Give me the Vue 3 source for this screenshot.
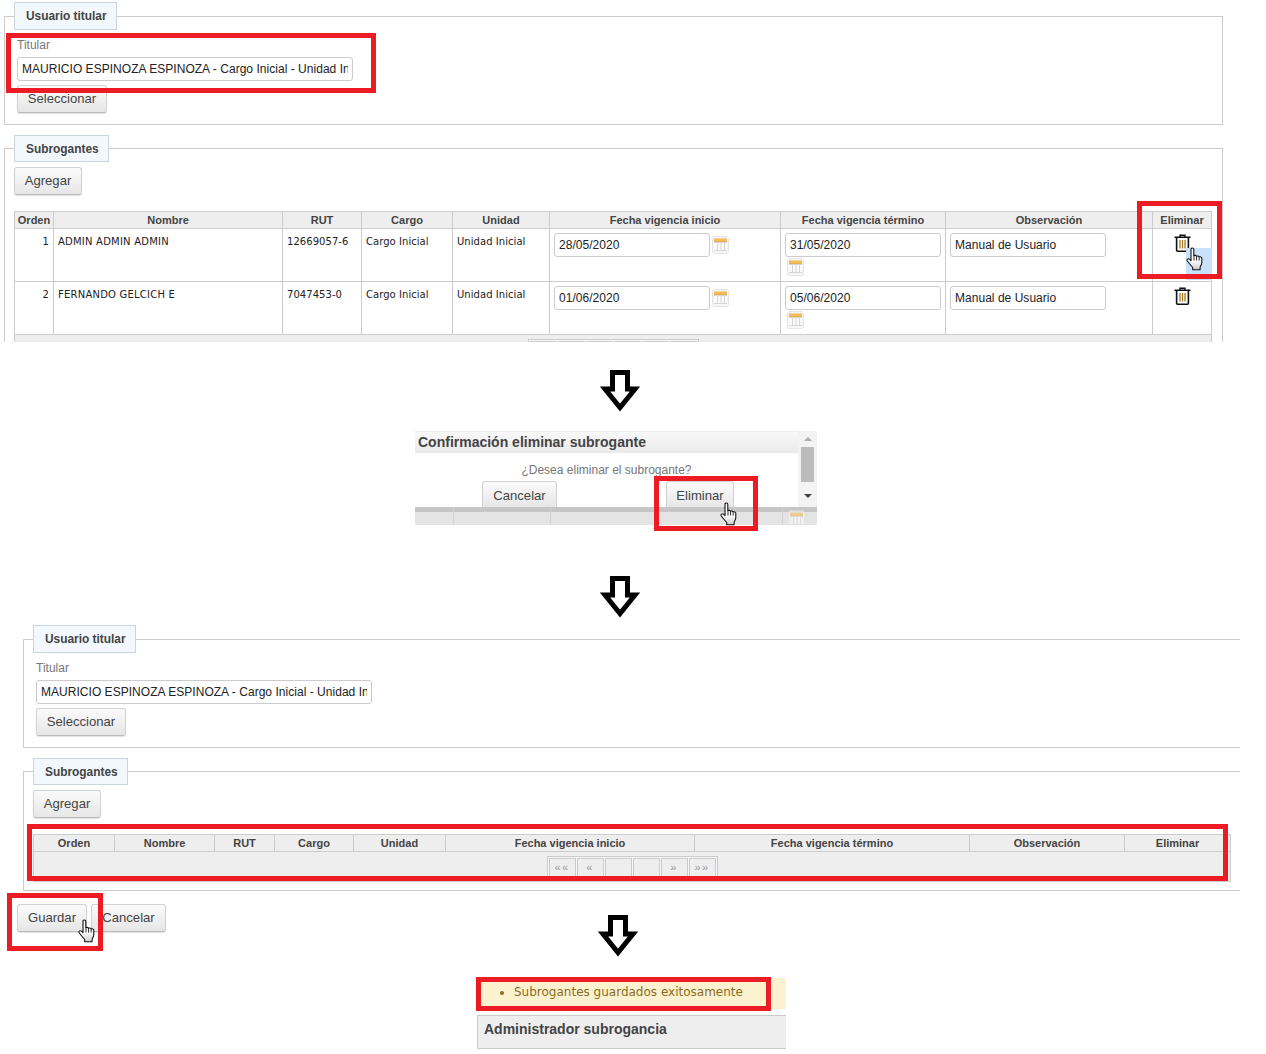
<script setup>
const colsA = [39, 229, 79, 91, 97, 231, 165, 207, 59]
const colsC = [81, 100, 60, 79, 92, 249, 275, 155, 106]
const heads = ['Orden', 'Nombre', 'RUT', 'Cargo', 'Unidad', 'Fecha vigencia inicio', 'Fecha vigencia término', 'Observación', 'Eliminar']
const rows = [
  { n: 1, name: 'ADMIN ADMIN ADMIN', rut: '12669057-6', from: '28/05/2020', to: '31/05/2020' },
  { n: 2, name: 'FERNANDO GELCICH E', rut: '7047453-0', from: '01/06/2020', to: '05/06/2020' }
]
const titular = 'MAURICIO ESPINOZA ESPINOZA - Cargo Inicial - Unidad Inicial'
const pager = ['««', '«', '', '', '»', '»»']
const arrows = ['a1', 'a2', 'a3']
const hands = ['h1', 'h2', 'h3']
const reds = ['r1', 'r2', 'r3', 'r4', 'r5', 'r6']
</script>

<template>
  <div class="canvas">
    <svg class="defs" width="0" height="0" aria-hidden="true">
      <symbol id="cal" viewBox="0 0 17 18">
        <rect x="0.5" y="0.5" width="16" height="17" rx="2" fill="#f6f6f6" stroke="#e4e4e4" />
        <rect x="2" y="6" width="13" height="9" fill="#fafafa" />
        <rect x="2" y="2.500" width="13" height="3.500" fill="#efaf45" />
        <rect x="2" y="3.500" width="13" height="1" fill="#f6c97e" />
        <path d="M2 6.500h13M2 14.500h13M5.500 7v7M9 7v7M12.500 7v7" stroke="#d6d6d6" fill="none" />
      </symbol>
      <symbol id="trash" viewBox="0 0 17 18">
        <path d="M6 3V1.200h5V3M.5 3.300h16" fill="none" stroke="#111" stroke-width="1.400" />
        <path d="M2.600 4v12.200q0 1 1 1h9.800q1 0 1-1V4" fill="#fff" stroke="#111" stroke-width="1.600" />
        <path d="M6 6v8.500M8.500 6v8.500M11 6v8.500" fill="none" stroke="#a87a26" stroke-width="1.300" />
      </symbol>
      <linearGradient id="handfill" x1="0" y1="0" x2="0" y2="1">
        <stop offset="0.55" stop-color="#fff" />
        <stop offset="1" stop-color="#cdcdcd" />
      </linearGradient>
      <symbol id="hand" viewBox="0 0 18 24">
        <path d="M5 2.200c0-1.600 2.800-1.600 2.800 0V9c.9-1 2.400-.8 2.700.4 1-.8 2.400-.4 2.600.7 1-.7 2.700-.2 2.700 1.100v4.600c0 2-1.200 3-1.700 4.500v2.400H6.700v-2.200C5 18.600 3.200 16.500 1.300 14c-1-1.500.8-3 2.200-1.800L5 13.700z" fill="url(#handfill)" stroke="#111" stroke-width="1.100" stroke-linejoin="round" />
        <path d="M8 9.500v4M10.600 9.800v3.700M13.200 10.500v3" fill="none" stroke="#111" stroke-width="0.900" />
      </symbol>
      <symbol id="arrow" viewBox="0 0 40 42">
        <polygon points="12.500,2.500 27.500,2.500 27.500,19 35,19 20,37.500 5,19 12.500,19" fill="#fff" stroke="#000" stroke-width="5" />
      </symbol>
    </svg>

    <section class="panel panel-a">
      <fieldset class="fs fs-user">
        <legend>Usuario titular</legend>
        <label class="field-label">Titular</label>
        <input class="text wide" :value="titular" readonly />
        <button class="btn select">Seleccionar</button>
      </fieldset>
      <fieldset class="fs fs-sub">
        <legend>Subrogantes</legend>
        <button class="btn add">Agregar</button>
        <table class="grid">
          <colgroup><col v-for="(w, i) in colsA" :key="i" :style="{ width: w + 'px' }" /></colgroup>
          <thead><tr><th v-for="h in heads" :key="h">{{ h }}</th></tr></thead>
          <tbody>
            <tr v-for="r in rows" :key="r.n" class="data">
              <td class="num">{{ r.n }}</td>
              <td class="name">{{ r.name }}</td>
              <td>{{ r.rut }}</td>
              <td>Cargo Inicial</td>
              <td>Unidad Inicial</td>
              <td class="cell-input">
                <input class="text date" :value="r.from" readonly />
                <svg class="cal"><use href="#cal" /></svg>
              </td>
              <td class="cell-input">
                <input class="text date" :value="r.to" readonly />
                <svg class="cal wrapped"><use href="#cal" /></svg>
              </td>
              <td class="cell-input"><input class="text date" value="Manual de Usuario" readonly /></td>
              <td class="cell-trash"><svg class="trash"><use href="#trash" /></svg></td>
            </tr>
            <tr class="foot">
              <td colspan="9">
                <div class="pager">
                  <span v-for="(p, i) in pager" :key="i"></span>
                </div>
              </td>
            </tr>
          </tbody>
        </table>
      </fieldset>
    </section>

    <section class="dialog">
      <div class="dialog-top">
        <div class="dialog-main">
          <h2>Confirmación eliminar subrogante</h2>
          <p>¿Desea eliminar el subrogante?</p>
          <div class="dialog-actions">
            <button class="btn cancel">Cancelar</button>
            <button class="btn remove">Eliminar</button>
          </div>
        </div>
        <div class="scrollbar">
          <i class="up"></i>
          <b></b>
          <i class="down"></i>
        </div>
      </div>
      <div class="strip">
        <span class="s1"></span><span class="s2"></span><span class="s3"></span>
        <svg class="cal strip-cal"><use href="#cal" /></svg>
      </div>
    </section>

    <section class="panel panel-c">
      <fieldset class="fs fs-user">
        <legend>Usuario titular</legend>
        <label class="field-label">Titular</label>
        <input class="text wide" :value="titular" readonly />
        <button class="btn select">Seleccionar</button>
      </fieldset>
      <fieldset class="fs fs-sub">
        <legend>Subrogantes</legend>
        <button class="btn add">Agregar</button>
        <table class="grid">
          <colgroup><col v-for="(w, i) in colsC" :key="i" :style="{ width: w + 'px' }" /></colgroup>
          <thead><tr><th v-for="h in heads" :key="h">{{ h }}</th></tr></thead>
          <tbody>
            <tr class="foot">
              <td colspan="9">
                <div class="pager">
                  <span v-for="(p, i) in pager" :key="i">{{ p }}</span>
                </div>
              </td>
            </tr>
          </tbody>
        </table>
      </fieldset>
      <div class="save-row">
        <button class="btn save">Guardar</button>
        <button class="btn back">Cancelar</button>
      </div>
    </section>

    <section class="result">
      <ul class="message"><li>Subrogantes guardados exitosamente</li></ul>
      <div class="admin">Administrador subrogancia</div>
    </section>

    <div class="cell-hover"></div>
    <div v-for="r in reds" :key="r" class="red" :class="r"></div>
    <svg v-for="a in arrows" :key="a" class="arrow" :class="a"><use href="#arrow" /></svg>
    <svg v-for="h in hands" :key="h" class="hand" :class="h"><use href="#hand" /></svg>
  </div>
</template>

<style>
html, body { margin: 0; background: #fff; }
</style>

<style scoped>
.canvas {
  position: relative;
  width: 1266px;
  height: 1054px;
  overflow: hidden;
  background: #fff;
  font-family: "Liberation Sans", Arial, sans-serif;
  font-size: 12px;
  color: #333;
}
.defs { position: absolute; }

.panel { position: absolute; left: 0; width: 1240px; overflow: hidden; box-sizing: border-box; padding-top: 2px; }
.panel-a { top: 0; height: 342px; }
.panel-c { top: 623px; height: 340px; }

.fs {
  display: block;
  box-sizing: border-box;
  margin: 0;
  border: 1px solid #ccc;
  min-width: 0;
}
.panel-a .fs { margin-left: 4px; width: 1219px; }
.panel-c .fs { margin-left: 23px; width: 1240px; }
.fs + .fs { margin-top: 10px; }
.fs-user { padding: 0 12px 11px; }
.fs-sub { padding: 0 9px 8px; }
legend {
  box-sizing: border-box;
  height: 28px;
  padding: 0 9px 0 11px;
  border: 1px solid #c9d6e2;
  background: #f2f8fd;
  color: #444;
  font-weight: bold;
  font-size: 11.9px;
  line-height: 26px;
}
.fs-user legend { margin-left: -3px; }
.fs-sub legend { height: 27px; line-height: 26px; }

.field-label { display: block; margin-top: 7px; color: #777; font-size: 12px; line-height: 16px; }
.text {
  box-sizing: border-box;
  height: 24px;
  padding: 0 4px;
  border: 1px solid #ccc;
  border-radius: 3px;
  background: #fff;
  color: #222;
  font: 12px "Liberation Sans", Arial, sans-serif;
  letter-spacing: 0.03px;
  outline: none;
}
.wide { display: block; width: 336px; margin-top: 4px; }
.date { width: 156px; vertical-align: top; }

.btn {
  display: block;
  box-sizing: border-box;
  height: 28px;
  padding: 0 0 2px;
  border: 1px solid #d2d2d2;
  border-bottom-color: #bbb;
  border-radius: 3px;
  background: linear-gradient(#fbfbfb, #e6e6e6);
  box-shadow: 0 1px 1px rgba(0, 0, 0, 0.12);
  color: #444;
  font: 13.1px "Liberation Sans", Arial, sans-serif;
}
.select { width: 90px; margin-top: 4px; }
.add { width: 68px; margin-top: 5px; }

.grid {
  width: 1197px;
  margin-top: 16px;
  border-collapse: collapse;
  table-layout: fixed;
}
.grid th, .grid td { border: 1px solid #ccc; padding: 0; }
.grid th {
  height: 16px;
  background: #eee;
  color: #444;
  font: bold 11px/16px "Liberation Sans", Arial, sans-serif;
  text-align: center;
}
.data td {
  height: 53px;
  padding: 6px 4px 0;
  box-sizing: border-box;
  vertical-align: top;
  color: #222;
  font: 10px/13px "DejaVu Sans", Verdana, sans-serif;
  letter-spacing: 0.05px;
}
.data .num { text-align: right; }
.data .name { letter-spacing: 0.22px; }
.data .cell-input { padding: 4px 2px 0 4px; }
.data .cell-trash { padding: 5px 0 0; text-align: center; }
.cal { display: inline-block; width: 17px; height: 18px; margin-left: 2px; margin-top: 3px; vertical-align: top; }
.cal.wrapped { margin-top: 1px; }
.trash { display: inline-block; width: 17px; height: 18px; vertical-align: top; }

.foot td { height: 30px; box-sizing: border-box; padding: 4px 0 0; background: #eee; vertical-align: top; }
.pager {
  display: flex;
  gap: 1px;
  width: fit-content;
  margin: 0 auto;
  padding: 1px;
  border: 1px solid #ccc;
  background: #f6f6f6;
}
.pager span {
  box-sizing: border-box;
  width: 27px;
  height: 20px;
  border: 1px solid #ccc;
  background: #eee;
  color: #9a9a9a;
  font: 11px/17px "Liberation Sans", Arial, sans-serif;
  letter-spacing: 1.5px;
  text-align: center;
}

.save-row { display: flex; gap: 4px; margin: 13px 0 0 17px; }
.save { width: 70px; }
.back { width: 75px; }

.dialog { position: absolute; left: 415px; top: 431px; width: 402px; height: 94px; overflow: hidden; background: #fff; }
.dialog-top { display: flex; height: 76px; }
.dialog-main { width: 383px; overflow: hidden; }
.dialog h2 {
  box-sizing: border-box;
  height: 22px;
  margin: 0;
  padding-left: 3px;
  border-top: 1px solid #eee;
  background: linear-gradient(#f8f8f8, #eaeaea);
  color: #444;
  font: bold 14px/21px "Liberation Sans", Arial, sans-serif;
}
.dialog p { margin: 9px 0 3px; color: #777; font-size: 12px; line-height: 16px; text-align: center; }
.dialog-actions { display: flex; }
.cancel { width: 75px; margin-left: 67px; flex: none; padding-bottom: 0; }
.remove { width: 68px; margin-left: 109px; flex: none; padding-bottom: 0; }
.scrollbar {
  display: flex;
  flex-direction: column;
  align-items: center;
  width: 19px;
  background: #f3f3f3;
}
.scrollbar i { width: 0; height: 0; border-left: 4px solid transparent; border-right: 4px solid transparent; }
.scrollbar .up { margin-top: 6px; border-bottom: 4px solid #aaa; }
.scrollbar .down { margin-top: 12px; border-top: 4px solid #444; }
.scrollbar b { width: 13px; height: 35px; margin-top: 6px; background: #bcbcbc; }
.strip { position: relative; display: flex; height: 18px; background: #e4e4e4; box-sizing: border-box; border-top: 5px solid #c6c6c6; }
.strip span { box-sizing: border-box; height: 18px; margin-top: -5px; border-right: 1px solid #cfcfcf; }
.s1 { width: 39px; }
.s2 { width: 97px; }
.s3 { width: 232px; }
.strip-cal { margin: -2px 0 0 5px; width: 17px; height: 18px; opacity: 0.55; }

.result { position: absolute; left: 477px; top: 978px; width: 309px; }
.message {
  box-sizing: border-box;
  height: 31px;
  margin: 0;
  padding: 6px 0 0 37px;
  background: #fdf2cf;
  color: #8a6d1f;
  font: 12px/16px "DejaVu Sans", Verdana, sans-serif;
}
.admin {
  box-sizing: border-box;
  height: 34px;
  margin-top: 6px;
  padding: 4px 0 0 6px;
  border: 1px solid #ccc;
  border-right: 0;
  background: #eee;
  color: #444;
  font: bold 14px/18px "Liberation Sans", Arial, sans-serif;
}

.cell-hover { position: absolute; left: 1186px; top: 248px; width: 26px; height: 32px; background: #c9e2fb; }
.red { position: absolute; box-sizing: border-box; border: 5px solid #ed1c24; }
.r1 { left: 6px; top: 33px; width: 370px; height: 60px; }
.r2 { left: 1137px; top: 201px; width: 85px; height: 78px; }
.r3 { left: 654px; top: 476px; width: 104px; height: 55px; }
.r4 { left: 27px; top: 824px; width: 1201px; height: 57px; }
.r5 { left: 7px; top: 893px; width: 96px; height: 58px; }
.r6 { left: 476px; top: 977px; width: 295px; height: 34px; }

.arrow { position: absolute; width: 40px; height: 42px; }
.a1 { left: 600px; top: 370px; }
.a2 { left: 600px; top: 576px; }
.a3 { left: 598px; top: 915px; }

.hand { position: absolute; width: 18px; height: 24px; }
.h1 { left: 1186px; top: 247px; }
.h2 { left: 720px; top: 502px; }
.h3 { left: 78px; top: 919px; }
</style>
